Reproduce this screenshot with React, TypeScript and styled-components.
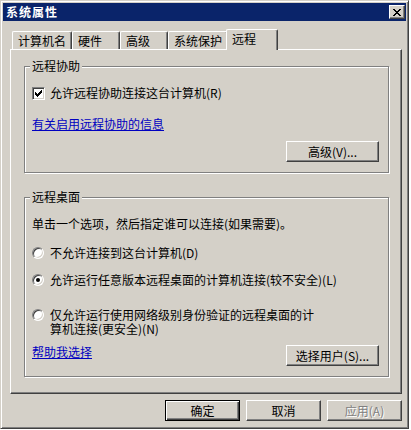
import React from 'react';
import styled, { createGlobalStyle, css } from 'styled-components';

const Global = createGlobalStyle`
  html, body { margin: 0; padding: 0; background: #ffffff; }
  body {
    font-family: "Noto Sans CJK SC", "Liberation Sans", sans-serif;
    font-size: 12px;
    color: #000;
  }
`;

const Window = styled.div`
  box-sizing: border-box;
  width: 409px;
  height: 429px;
  background: #d4d0c8;
  border: 1px solid;
  border-color: #d4d0c8 #404040 #404040 #d4d0c8;
  box-shadow: inset 1px 1px #ffffff, inset -1px -1px #808080;
  padding: 2px;
  display: flex;
  flex-direction: column;
`;

const TitleBar = styled.div`
  height: 18px;
  flex: none;
  background: #0a246a;
  display: flex;
  align-items: center;
  justify-content: space-between;
  padding: 0 1px 0 3px;
`;

const Title = styled.span`
  color: #ffffff;
  font-weight: bold;
  font-size: 12px;
  letter-spacing: 1px;
  line-height: 18px;
`;

const CloseButton = styled.div`
  box-sizing: border-box;
  width: 16px;
  height: 14px;
  background: #d4d0c8;
  border: 1px solid;
  border-color: #ffffff #404040 #404040 #ffffff;
  box-shadow: inset -1px -1px #808080;
  display: flex;
  align-items: center;
  justify-content: center;
`;

const Body = styled.div`
  flex: 1;
  display: flex;
  flex-direction: column;
  padding: 8px 4px 0 7px;
`;

const TabRow = styled.div`
  display: flex;
  align-items: flex-end;
  height: 20px;
  padding-left: 2px;
  position: relative;
  z-index: 1;
`;

const Tab = styled.div<{ $w: number; $active?: boolean }>`
  box-sizing: border-box;
  width: ${(p) => (p.$active ? p.$w + 4 : p.$w)}px;
  height: ${(p) => (p.$active ? 21 : 18)}px;
  margin: ${(p) => (p.$active ? '0 -2px -1px -2px' : '0')};
  border-left: 1px solid #ffffff;
  border-top: 1px solid #ffffff;
  border-right: 1px solid #404040;
  box-shadow: inset -1px 0 #808080;
  border-radius: 2px 2px 0 0;
  background: #d4d0c8;
  padding: 0 0 ${(p) => (p.$active ? 2 : 0)}px 5px;
  display: flex;
  align-items: center;
  line-height: 14px;
  white-space: nowrap;
`;

const Panel = styled.div`
  box-sizing: border-box;
  height: 345px;
  flex: none;
  border: 1px solid;
  border-color: #ffffff #404040 #404040 #ffffff;
  box-shadow: inset -1px -1px #808080;
  padding: 9px 12px 0 13px;
  display: flex;
  flex-direction: column;
  gap: 17px;
`;

const Group = styled.fieldset`
  margin: 0;
  min-inline-size: 0;
  border: 1px solid #808080;
  box-shadow: 1px 1px #ffffff, inset 1px 1px #ffffff;
  padding: 13px 9px 10px 7px;
  display: flex;
  flex-direction: column;
`;

const Legend = styled.legend`
  padding: 0 2px;
  margin-left: -2px;
  line-height: 14px;
  background: #d4d0c8;
`;

const OptionRow = styled.label<{ $top: number; $gap: number; $multi?: boolean }>`
  display: flex;
  align-items: ${(p) => (p.$multi ? 'flex-start' : 'center')};
  gap: ${(p) => p.$gap}px;
  margin-top: ${(p) => p.$top}px;
  line-height: 14px;
  white-space: nowrap;
`;

const Text = styled.div<{ $top?: number }>`
  line-height: 14px;
  margin-top: ${(p) => p.$top ?? 0}px;
  white-space: nowrap;
`;

const CheckBox = styled.span`
  box-sizing: border-box;
  width: 13px;
  height: 13px;
  flex: none;
  background: #ffffff;
  border: 1px solid;
  border-color: #808080 #ffffff #ffffff #808080;
  box-shadow: inset 1px 1px #404040, inset -1px -1px #d4d0c8;
  display: flex;
  align-items: center;
  justify-content: center;
`;

const Radio = styled.span<{ $checked?: boolean; $multi?: boolean }>`
  box-sizing: border-box;
  width: 12px;
  height: 12px;
  flex: none;
  margin-top: ${(p) => (p.$multi ? 1 : 0)}px;
  border-radius: 50%;
  background: #ffffff;
  border: 1px solid;
  border-color: #808080 #ffffff #ffffff #808080;
  box-shadow: inset 1px 1px #404040, inset -1px -1px #d4d0c8;
  display: flex;
  align-items: center;
  justify-content: center;
  &::after {
    content: '';
    width: 4px;
    height: 4px;
    border-radius: 50%;
    background: #000;
    display: ${(p) => (p.$checked ? 'block' : 'none')};
  }
`;

const Link = styled.a<{ $top?: number }>`
  color: #0000c0;
  text-decoration: underline;
  line-height: 14px;
  margin-top: ${(p) => p.$top ?? 0}px;
  align-self: flex-start;
  cursor: pointer;
`;

const ActionRow = styled.div<{ $top: number; $split?: boolean }>`
  display: flex;
  align-items: center;
  justify-content: ${(p) => (p.$split ? 'space-between' : 'flex-end')};
  margin-top: ${(p) => p.$top}px;
`;

const Button = styled.button<{ $w: number; $default?: boolean }>`
  box-sizing: border-box;
  width: ${(p) => p.$w}px;
  height: 21px;
  padding: 0;
  margin: 0;
  font: inherit;
  font-size: 12px;
  line-height: 14px;
  color: #000;
  background: #d4d0c8;
  border: 1px solid;
  border-color: #ffffff #404040 #404040 #ffffff;
  box-shadow: inset -1px -1px #808080;
  ${(p) =>
    p.$default &&
    css`
      border-color: #000000;
      box-shadow: inset 1px 1px #ffffff, inset -1px -1px #404040, inset -2px -2px #808080;
    `}
  &:disabled {
    color: #808080;
    text-shadow: 1px 1px #ffffff;
  }
`;

const Footer = styled.div`
  display: flex;
  justify-content: flex-end;
  gap: 6px;
  margin-top: 6px;
`;

const CheckMark = () => (
  <svg width="7" height="7" viewBox="0 0 7 7" shapeRendering="crispEdges">
    <path
      fill="#000"
      d="M6 0h1v1h-1z M5 1h2v1h-2z M0 2h1v1h-1z M4 2h3v1h-3z M0 3h2v1h-2z M3 3h3v1h-3z M0 4h5v1h-5z M1 5h3v1h-3z M2 6h1v1h-1z"
    />
  </svg>
);

const CloseGlyph = () => (
  <svg width="8" height="7" viewBox="0 0 8 7" shapeRendering="crispEdges">
    <path
      fill="#000"
      d="M0 0h2v1h-2z M6 0h2v1h-2z M1 1h2v1h-2z M5 1h2v1h-2z M2 2h4v1h-4z M3 3h2v1h-2z M2 4h4v1h-4z M1 5h2v1h-2z M5 5h2v1h-2z M0 6h2v1h-2z M6 6h2v1h-2z"
    />
  </svg>
);

const tabs = [
  { label: '计算机名', w: 60 },
  { label: '硬件', w: 48 },
  { label: '高级', w: 48 },
  { label: '系统保护', w: 60 },
  { label: '远程', w: 48, active: true },
];

export default function App() {
  return (
    <>
      <Global />
      <Window>
        <TitleBar>
          <Title>系统属性</Title>
          <CloseButton>
            <CloseGlyph />
          </CloseButton>
        </TitleBar>
        <Body>
          <TabRow>
            {tabs.map((t) => (
              <Tab key={t.label} $w={t.w} $active={t.active}>
                {t.label}
              </Tab>
            ))}
          </TabRow>
          <Panel>
            <Group>
              <Legend>远程协助</Legend>
              <OptionRow $top={0} $gap={5}>
                <CheckBox>
                  <CheckMark />
                </CheckBox>
                允许远程协助连接这台计算机(R)
              </OptionRow>
              <Link $top={17}>有关启用远程协助的信息</Link>
              <ActionRow $top={10}>
                <Button $w={93}>高级(V)...</Button>
              </ActionRow>
            </Group>
            <Group>
              <Legend>远程桌面</Legend>
              <Text>单击一个选项，然后指定谁可以连接(如果需要)。</Text>
              <OptionRow $top={15} $gap={6}>
                <Radio />
                不允许连接到这台计算机(D)
              </OptionRow>
              <OptionRow $top={13} $gap={6}>
                <Radio $checked />
                允许运行任意版本远程桌面的计算机连接(较不安全)(L)
              </OptionRow>
              <OptionRow $top={21} $gap={6} $multi>
                <Radio $multi />
                <span>
                  仅允许运行使用网络级别身份验证的远程桌面的计
                  <br />
                  算机连接(更安全)(N)
                </span>
              </OptionRow>
              <ActionRow $top={9} $split>
                <Link>帮助我选择</Link>
                <Button $w={93}>选择用户(S)...</Button>
              </ActionRow>
            </Group>
          </Panel>
          <Footer>
            <Button $w={75} $default>
              确定
            </Button>
            <Button $w={75}>取消</Button>
            <Button $w={75} disabled>
              应用(A)
            </Button>
          </Footer>
        </Body>
      </Window>
    </>
  );
}
